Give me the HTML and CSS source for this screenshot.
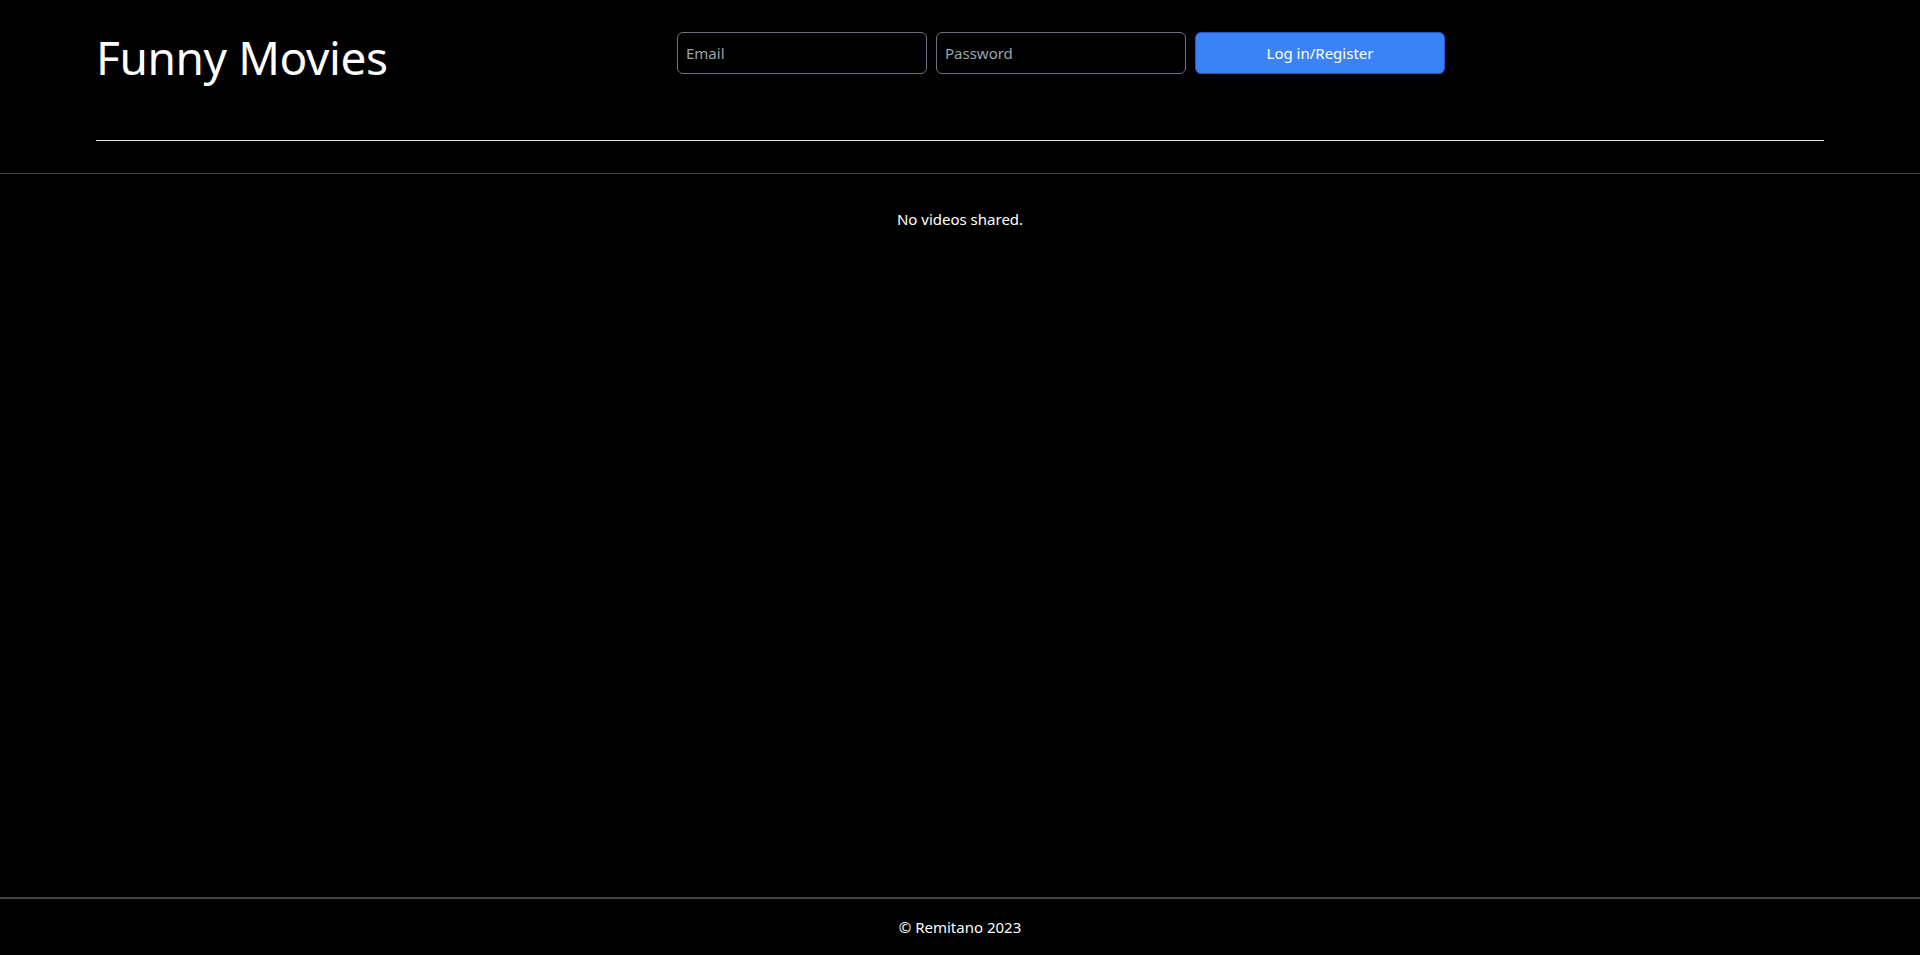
FILE: index.html
```
<!DOCTYPE html>
<html lang="en">
<head>
<meta charset="utf-8">
<title>Funny Movies</title>
<link rel="stylesheet" href="styles.css">
</head>
<body>
<div class="page">
  <header class="site-header">
    <div class="header-inner">
      <div class="top-row">
        <h1 class="brand">Funny Movies</h1>
        <form class="login-form">
          <input class="field" type="email" placeholder="Email">
          <input class="field" type="password" placeholder="Password">
          <button class="btn-primary" type="button">Log in/Register</button>
        </form>
      </div>
      <hr class="divider">
    </div>
  </header>
  <main class="content">
    <p class="empty">No videos shared.</p>
  </main>
  <footer class="site-footer">
    <p class="copyright">© Remitano 2023</p>
  </footer>
</div>
</body>
</html>
```
FILE: styles.css
```
* { box-sizing: border-box; }
html, body { margin: 0; padding: 0; background: #000; }
body {
  color: #fff;
  font-family: "Segoe UI", "Noto Sans", "Open Sans", sans-serif;
  font-size: 16px;
}
.page {
  min-height: 100vh;
  display: flex;
  flex-direction: column;
}
.site-header {
  border-bottom: 1px solid #444;
  padding: 0 96px;
}
.header-inner {
  padding-top: 32px;
  height: 173px;
  display: flex;
  flex-direction: column;
}
.top-row {
  display: flex;
  align-items: flex-start;
  height: 52px;
}
.brand {
  flex: 0 0 581px;
  margin: 0;
  margin-top: -3px;
  font-size: 46px;
  font-weight: 400;
  line-height: 56px;
  letter-spacing: -0.4px;
}
.login-form {
  display: flex;
  gap: 9px;
  margin: 0;
}
.field {
  width: 250px;
  height: 42px;
  background: #000;
  border: 1px solid #6b7280;
  border-radius: 6px;
  color: #fff;
  font-family: inherit;
  font-size: 15px;
  padding: 0 8px;
}
.field::placeholder { color: #9ca3af; }
.btn-primary {
  width: 250px;
  height: 42px;
  background: #3b82f6;
  border: 1px solid #2456c9;
  border-radius: 6px;
  color: #fff;
  font-family: inherit;
  font-size: 15px;
}
.divider {
  margin: 56px 0 0;
  border: 0;
  border-top: 1px solid #e5e5e5;
  height: 0;
}
.content {
  flex: 1;
  text-align: center;
}
.empty {
  margin: 33px 0 0;
  font-size: 15px;
  line-height: 24px;
}
.site-footer {
  border-top: 2px solid #444;
  height: 58px;
  display: flex;
  align-items: center;
  justify-content: center;
}
.copyright {
  margin: 0;
  font-size: 15px;
}
```
